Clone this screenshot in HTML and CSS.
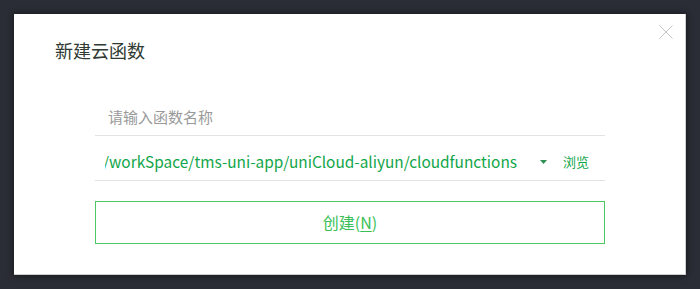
FILE: index.html
```html
<!DOCTYPE html>
<html lang="zh">
<head>
<meta charset="utf-8">
<link rel="stylesheet" href="styles.css">
</head>
<body>
<div class="dialog">
  <svg class="close" width="14" height="14" viewBox="0 0 14 14"><path d="M0.5 0.5L13.5 13.5M13.5 0.5L0.5 13.5" stroke="#c4c4c4" stroke-width="1" fill="none"/></svg>
  <div class="title">新建云函数</div>
  <div class="form">
    <div class="row"><span class="placeholder">请输入函数名称</span></div>
    <div class="row row-path">
      <div class="path"><span>/workSpace/tms-uni-app/uniCloud-aliyun/cloudfunctions</span></div>
      <svg class="arrow" width="7" height="4" viewBox="0 0 7 4"><path d="M0 0H7L3.5 4Z" fill="#2f8f55"/></svg>
      <span class="browse">浏览</span>
    </div>
    <div class="button">创建(<u>N</u>)</div>
  </div>
</div>
</body>
</html>
```
FILE: styles.css
```css
html, body {
  margin: 0;
  padding: 0;
}
body {
  width: 700px;
  height: 289px;
  background: #2a2d35;
  padding: 14px;
  box-sizing: border-box;
  font-family: "Noto Sans CJK SC", "Noto Sans", sans-serif;
  overflow: hidden;
}
.dialog {
  position: relative;
  width: 672px;
  height: 261px;
  box-sizing: border-box;
  background: #fff;
  border-right: 1px solid #cfcfcf;
  border-bottom: 1px solid #cfcfcf;
  box-shadow: 0 0 6px 1px rgba(0, 0, 0, 0.45);
}
.close {
  position: absolute;
  top: 11px;
  right: 12px;
  display: block;
}
.title {
  padding: 24px 0 0 41px;
  font-size: 18px;
  line-height: 24px;
  height: 24px;
  color: #2f3a33;
}
.form {
  margin: 29px 0 0 81px;
  width: 510px;
}
.row {
  display: flex;
  align-items: center;
  padding-top: 7px;
  height: 37px;
  line-height: 37px;
  border-bottom: 1px solid #e3e3e3;
  font-size: 15px;
}
.placeholder {
  padding-left: 13px;
  color: #9a9a9a;
}
.path {
  flex: 1;
  min-width: 0;
  display: flex;
  justify-content: flex-end;
  overflow: hidden;
  white-space: nowrap;
  margin-left: 10px;
  font-size: 15.4px;
  color: #12a64a;
}
.arrow {
  display: block;
  margin-left: 23px;
  flex: none;
}
.browse {
  margin-left: 16px;
  margin-right: 16px;
  font-size: 13px;
  color: #12a64a;
  flex: none;
}
.button {
  margin-top: 20px;
  height: 41px;
  line-height: 41px;
  border: 1px solid #4cc764;
  text-align: center;
  font-size: 16px;
  color: #3cbf58;
}
.button u {
  text-decoration: underline;
  text-underline-offset: 2px;
}
```
